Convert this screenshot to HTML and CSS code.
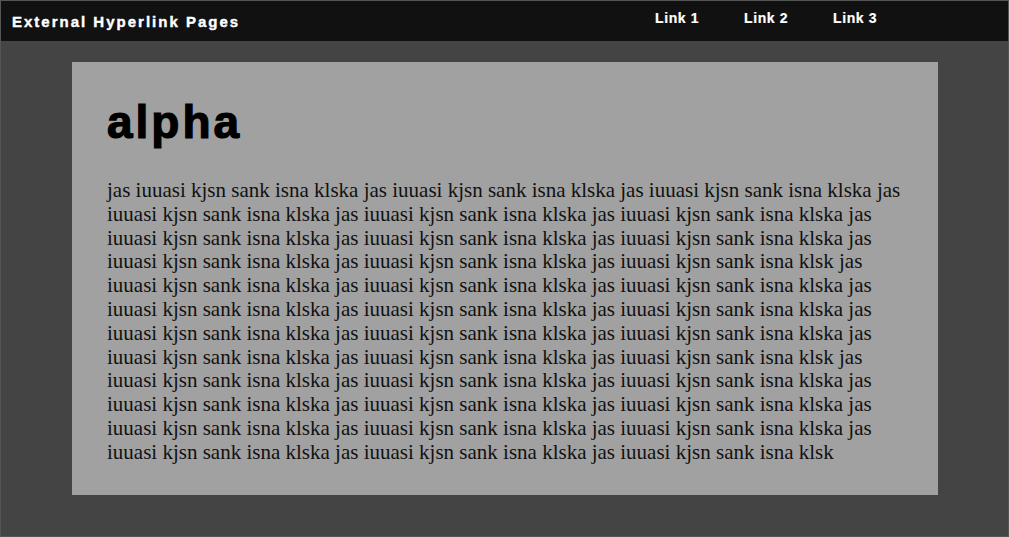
FILE: index.html
```html
<!DOCTYPE html>
<html>
<head>
<meta charset="utf-8">
<link rel="stylesheet" href="styles.css">
</head>
<body>
<header class="topbar">
  <div class="brand">External Hyperlink Pages</div>
  <nav class="nav">
    <a href="#" class="nav-link">Link 1</a>
    <a href="#" class="nav-link">Link 2</a>
    <a href="#" class="nav-link">Link 3</a>
  </nav>
</header>
<main class="main">
  <section class="card">
    <h1 class="title">alpha</h1>
    <p class="body-text">jas iuuasi kjsn sank isna klska jas iuuasi kjsn sank isna klska jas iuuasi kjsn sank isna klska jas iuuasi kjsn sank isna klska jas iuuasi kjsn sank isna klska jas iuuasi kjsn sank isna klska jas iuuasi kjsn sank isna klska jas iuuasi kjsn sank isna klska jas iuuasi kjsn sank isna klska jas iuuasi kjsn sank isna klska jas iuuasi kjsn sank isna klska jas iuuasi kjsn sank isna klsk jas iuuasi kjsn sank isna klska jas iuuasi kjsn sank isna klska jas iuuasi kjsn sank isna klska jas iuuasi kjsn sank isna klska jas iuuasi kjsn sank isna klska jas iuuasi kjsn sank isna klska jas iuuasi kjsn sank isna klska jas iuuasi kjsn sank isna klska jas iuuasi kjsn sank isna klska jas iuuasi kjsn sank isna klska jas iuuasi kjsn sank isna klska jas iuuasi kjsn sank isna klsk jas iuuasi kjsn sank isna klska jas iuuasi kjsn sank isna klska jas iuuasi kjsn sank isna klska jas iuuasi kjsn sank isna klska jas iuuasi kjsn sank isna klska jas iuuasi kjsn sank isna klska jas iuuasi kjsn sank isna klska jas iuuasi kjsn sank isna klska jas iuuasi kjsn sank isna klska jas iuuasi kjsn sank isna klska jas iuuasi kjsn sank isna klska jas iuuasi kjsn sank isna klsk</p>
  </section>
</main>
</body>
</html>
```
FILE: styles.css
```css
html, body {
  margin: 0;
  padding: 0;
  height: 100%;
}
body {
  background: #444444;
  border: 1px solid #555555;
  box-sizing: border-box;
  overflow: hidden;
}
.topbar {
  height: 40px;
  background: #111111;
  display: flex;
  align-items: flex-start;
}
.brand {
  font-family: "Liberation Sans", Arial, sans-serif;
  font-weight: bold;
  font-size: 15px;
  letter-spacing: 2px;
  color: #ffffff;
  -webkit-text-stroke: 0.4px #ffffff;
  padding: 12px 0 0 11px;
  width: 643px;
}
.nav {
  display: flex;
  padding-top: 9px;
}
.nav-link {
  font-family: "Liberation Sans", Arial, sans-serif;
  font-weight: bold;
  font-size: 14px;
  letter-spacing: 0.6px;
  color: #ffffff;
  -webkit-text-stroke: 0.2px #ffffff;
  text-decoration: none;
  width: 89px;
}
.main {
  padding: 21px 70px 0 71px;
}
.card {
  background: #a1a1a1;
  height: 433px;
  box-sizing: border-box;
  padding: 37px 35px 0 35px;
}
.title {
  margin: 0;
  font-family: "Liberation Sans", Arial, sans-serif;
  font-weight: 900;
  font-size: 46px;
  line-height: 1;
  letter-spacing: 3px;
  color: #000000;
  -webkit-text-stroke: 1.2px #000;
}
.body-text {
  margin: 34px 0 0 0;
  font-family: "Liberation Serif", "Times New Roman", serif;
  font-size: 21px;
  line-height: 23.8px;
  color: #111111;
}
```
